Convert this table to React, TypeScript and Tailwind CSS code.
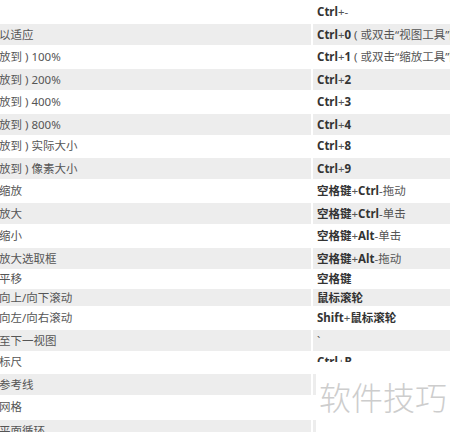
import React from "react";

type Seg = { t: string; b?: boolean };
type Row = { h: number; gray: boolean; left: string; right: Seg[] };

const B = (t: string): Seg => ({ t, b: true });
const N = (t: string): Seg => ({ t });

const rows: Row[] = [
  { h: 24, gray: false, left: "", right: [B("Ctrl"), N("+-")] },
  { h: 21, gray: true, left: "以适应", right: [B("Ctrl"), N("+"), B("0"), N(" ( 或双击“视图工具”图标 )")] },
  { h: 24, gray: false, left: "放到 ) 100%", right: [B("Ctrl"), N("+"), B("1"), N(" ( 或双击“缩放工具”图标 )")] },
  { h: 21, gray: true, left: "放到 ) 200%", right: [B("Ctrl"), N("+"), B("2")] },
  { h: 24, gray: false, left: "放到 ) 400%", right: [B("Ctrl"), N("+"), B("3")] },
  { h: 21, gray: true, left: "放到 ) 800%", right: [B("Ctrl"), N("+"), B("4")] },
  { h: 23, gray: false, left: "放到 ) 实际大小", right: [B("Ctrl"), N("+"), B("8")] },
  { h: 21, gray: true, left: "放到 ) 像素大小", right: [B("Ctrl"), N("+"), B("9")] },
  { h: 24, gray: false, left: "缩放", right: [B("空格键"), N("+"), B("Ctrl"), N("-拖动")] },
  { h: 21, gray: true, left: "放大", right: [B("空格键"), N("+"), B("Ctrl"), N("-单击")] },
  { h: 24, gray: false, left: "缩小", right: [B("空格键"), N("+"), B("Alt"), N("-单击")] },
  { h: 21, gray: true, left: "放大选取框", right: [B("空格键"), N("+"), B("Alt"), N("-拖动")] },
  { h: 20, gray: false, left: "平移", right: [B("空格键")] },
  { h: 17, gray: true, left: "向上/向下滚动", right: [B("鼠标滚轮")] },
  { h: 24, gray: false, left: "向左/向右滚动", right: [B("Shift"), N("+"), B("鼠标滚轮")] },
  { h: 21, gray: true, left: "至下一视图", right: [N("`")] },
  { h: 23, gray: false, left: "标尺", right: [B("Ctrl"), N("+"), B("R")] },
  { h: 21, gray: true, left: "参考线", right: [] },
  { h: 25, gray: false, left: "网格", right: [] },
  { h: 21, gray: true, left: "平面循环", right: [] },
];

export default function App() {
  return (
    <div className="relative w-[450px] h-[432px] overflow-hidden bg-white font-['Noto_Sans','Noto_Sans_CJK_SC',sans-serif] text-[11.5px]">
      <div className="flex flex-col">
        {rows.map((r, i) => (
          <div key={i} className="grid grid-cols-[311px_137px] gap-x-[2px]" style={{ height: r.h }}>
            <div
              className={`flex items-center overflow-hidden whitespace-pre text-[#555555] ${r.gray ? "bg-[#ededed]" : "bg-white pb-[1px]"}`}
            >
              <span className="-ml-[1px]">{r.left}</span>
            </div>
            <div
              className={`flex items-center overflow-hidden whitespace-pre pl-[4px] text-[#555555] ${r.gray ? "bg-[#ededed]" : "bg-white pb-[1px]"}`}
            >
              {r.right.map((s, j) => (
                <span key={j} className={s.b ? "font-bold text-[#333333]" : "font-normal"}>
                  {s.t}
                </span>
              ))}
            </div>
          </div>
        ))}
      </div>
      <div className="absolute left-[316px] top-[362px] w-[134px] h-[70px] bg-white flex items-center justify-center">
        <span className="text-[32px] leading-none font-light text-[#cdcdcd] whitespace-nowrap mt-[2px]">
          软件技巧
        </span>
      </div>
    </div>
  );
}
